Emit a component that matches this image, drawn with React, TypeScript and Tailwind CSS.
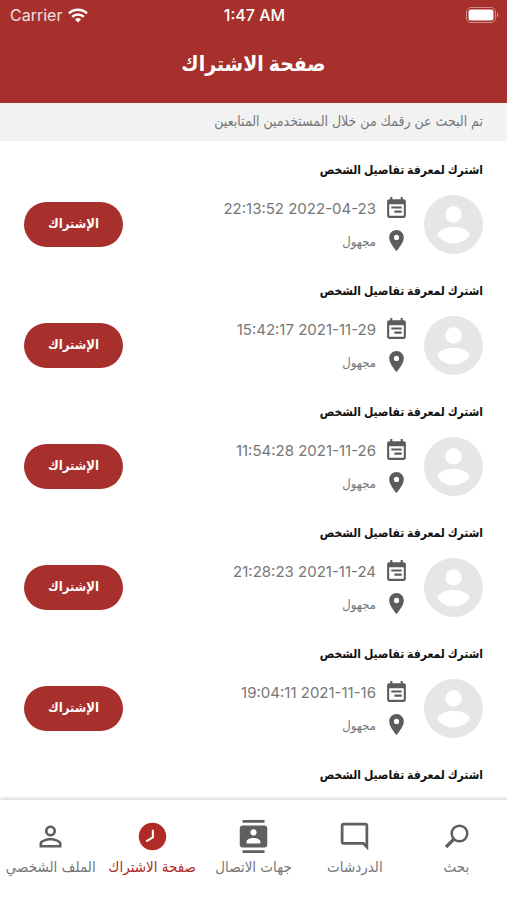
import {
  MdContacts,
  MdEventNote,
  MdLocationOn,
  MdOutlineModeComment,
  MdPersonOutline,
  MdWatchLater,
} from 'react-icons/md';

type Visit = { id: number; date?: string };

const visits: Visit[] = [
  { id: 1, date: '2022-04-23 22:13:52' },
  { id: 2, date: '2021-11-29 15:42:17' },
  { id: 3, date: '2021-11-26 11:54:28' },
  { id: 4, date: '2021-11-24 21:28:23' },
  { id: 5, date: '2021-11-16 19:04:11' },
  { id: 6 },
];

const tabs = [
  { label: 'بحث', icon: SearchIcon },
  { label: 'الدردشات', icon: MdOutlineModeComment },
  { label: 'جهات الاتصال', icon: MdContacts },
  { label: 'صفحة الاشتراك', icon: MdWatchLater, flip: true, active: true },
  { label: 'الملف الشخصي', icon: MdPersonOutline },
];

function SearchIcon({ size, className }: { size?: number; className?: string }) {
  return (
    <svg width={size} height={size} viewBox="0 0 33 33" fill="none" stroke="currentColor" strokeWidth="2.5" className={className}>
      <circle cx="19.5" cy="13.5" r="7.8" />
      <path d="M14 19l-8 8" strokeWidth="3.2" />
    </svg>
  );
}

function StatusBar() {
  return (
    <div dir="ltr" className="grid grid-cols-3 items-center h-[30px] ps-[10px] pe-2 text-base">
      <div className="flex items-center gap-1.5 text-white/85">
        <span>Carrier</span>
        <svg width="20" height="15" viewBox="0 0 20 15" fill="none" stroke="#fff" strokeWidth="2.6">
          <path d="M1 5.4a12.8 12.8 0 0 1 18 0" />
          <path d="M4.2 8.9a8.2 8.2 0 0 1 11.6 0" />
          <path d="M10 14.6l-3-3.1a4.3 4.3 0 0 1 6 0z" fill="#fff" stroke="none" />
        </svg>
      </div>
      <div className="text-center font-medium">1:47 AM</div>
      <svg width="33" height="16" viewBox="0 0 33 16" className="justify-self-end">
        <rect x="0.5" y="0.5" width="29" height="15" rx="4.5" fill="none" stroke="#fff" strokeOpacity="0.45" />
        <rect x="2.5" y="2.5" width="25" height="11" rx="2.5" fill="#fff" />
        <path d="M31 5.5c1.6.6 1.6 4.4 0 5z" fill="#fff" fillOpacity="0.5" />
      </svg>
    </div>
  );
}

function Avatar() {
  return (
    <svg width="59" height="59" viewBox="0 0 59 59" className="shrink-0">
      <circle cx="29.5" cy="29.5" r="29.5" fill="#e6e6e6" />
      <circle cx="29.5" cy="19.5" r="8.2" fill="#fff" />
      <path d="M13.2 39.500C15 34.800 22.500 31.800 29.500 31.800S44 34.800 45.800 39.500C42.500 45 36.500 48.500 29.500 48.500S16.500 45 13.200 39.500z" fill="#fff" />
    </svg>
  );
}

function VisitRow({ date }: { date?: string }) {
  return (
    <li className="px-6 pt-[17px] pb-2">
      <h2 className="text-xs leading-6 font-bold text-[#111]">اشترك لمعرفة تفاصيل الشخص</h2>
      {date && (
        <div className="flex items-center mt-[13px]">
          <Avatar />
          <div className="flex-1 ms-[15px] flex flex-col gap-[7px] text-[#777]">
            <div className="flex items-center gap-2">
              <MdEventNote size={25} className="-scale-x-100 text-[#5c5c5c]" />
              <span className="text-[15px] leading-6">{date}</span>
            </div>
            <div className="flex items-center gap-2">
              <MdLocationOn size={25} className="text-[#5c5c5c]" />
              <span className="text-[13px] leading-6">مجهول</span>
            </div>
          </div>
          <button className="h-[45px] w-[99px] pb-0.5 rounded-full bg-[#a72f2c] text-white text-[13px] font-bold">
            الإشتراك
          </button>
        </div>
      )}
    </li>
  );
}

export default function App() {
  return (
    <div
      dir="rtl"
      lang="ar"
      className="flex flex-col h-screen bg-white font-['Inter','DejaVu_Sans_Condensed','DejaVu_Sans',sans-serif]"
    >
      <header className="bg-[#a72f2c] text-white">
        <StatusBar />
        <h1 className="h-[73px] pt-4 text-center text-[21px] leading-9 font-bold">صفحة الاشتراك</h1>
      </header>
      <p className="h-[38px] px-6 bg-[#f2f2f2] text-sm leading-9 text-[#777]">
        تم البحث عن رقمك من خلال المستخدمين المتابعين
      </p>

      <ul className="flex-1 min-h-0 overflow-y-auto">
        {visits.map((visit) => (
          <VisitRow key={visit.id} date={visit.date} />
        ))}
      </ul>

      <nav className="relative grid grid-cols-5 h-[100px] pt-5 bg-white shadow-[0_-2px_3px_rgba(0,0,0,0.15)]">
        {tabs.map(({ label, icon: Icon, flip, active }) => (
          <a
            key={label}
            href="#"
            className={`flex flex-col items-center gap-0.5 whitespace-nowrap ${active ? 'text-[#b02a27]' : 'text-[#777]'}`}
          >
            <Icon size={33} className={`${flip ? '-scale-x-100' : ''} ${active ? '' : 'text-[#5f5f5f]'}`} />
            <span className="text-[15px] leading-6">{label}</span>
          </a>
        ))}
      </nav>
    </div>
  );
}
